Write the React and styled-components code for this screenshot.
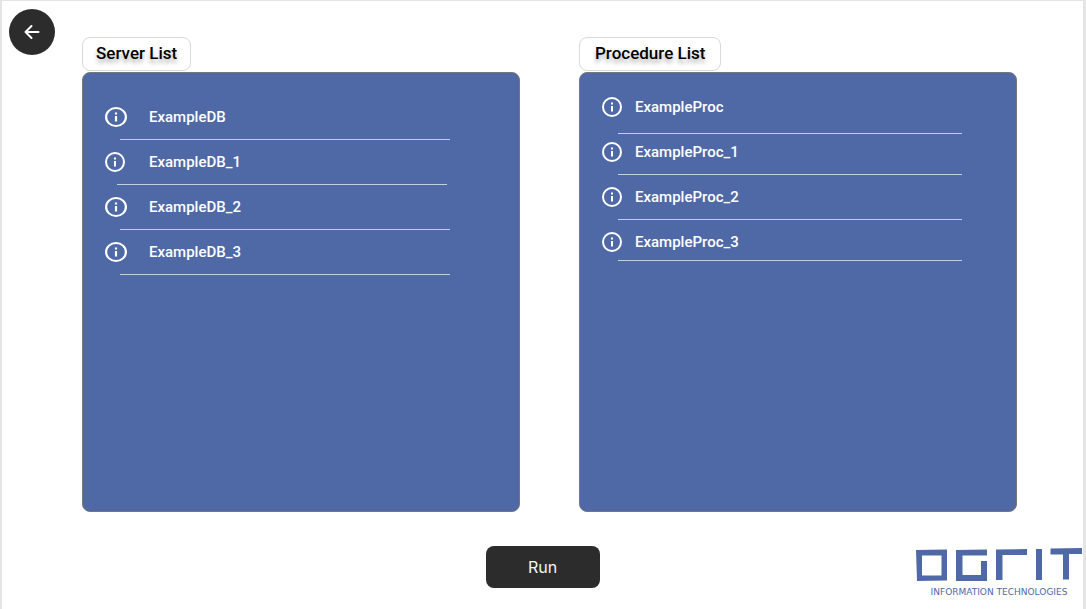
import React from "react";
import styled, { createGlobalStyle } from "styled-components";

const GlobalStyle = createGlobalStyle`
  * { box-sizing: border-box; }
  body {
    margin: 0;
    background: #ffffff;
    font-family: Roboto, "Liberation Sans", sans-serif;
  }
`;

const Page = styled.div`
  min-height: 100vh;
  display: flex;
  flex-direction: column;
  background: #ffffff;
  border: solid #e5e5e5;
  border-width: 1px 3px 0 2px;
`;

const Workspace = styled.main`
  flex: 1;
  display: flex;
  padding: 8px 66px 0 7px;
`;

const BackButton = styled.button`
  flex: none;
  width: 46px;
  height: 46px;
  margin-right: 27px;
  padding: 0;
  display: grid;
  place-items: center;
  border: 0;
  border-radius: 50%;
  background: #2c2c2c;
  color: #ffffff;
  cursor: pointer;
`;

const Columns = styled.div`
  flex: 1;
  display: grid;
  grid-template-columns: 1fr 1fr;
  gap: 59px;
  padding-top: 28px;
`;

const Column = styled.section`
  display: flex;
  flex-direction: column;
  align-items: flex-start;
`;

const Title = styled.h2`
  margin: 0 0 1px;
  height: 34px;
  padding: 0 ${(p) => p.$pad}px;
  border: 1px solid #d9d9d9;
  border-radius: 8px;
  font-size: 17px;
  font-weight: 500;
  line-height: 30px;
  color: #000000;
  text-shadow: 0 4px 4px rgba(0, 0, 0, 0.3);
`;

const Panel = styled.ul`
  flex: 1;
  align-self: stretch;
  margin: 0;
  padding: ${(p) => p.$top}px 0 24px 22px;
  list-style: none;
  border: 1px solid #75777c;
  border-radius: 8px;
  background: #4e69a6;
`;

const Item = styled.li`
  height: 45px;
`;

const ItemLabel = styled.div`
  height: 24px;
  display: grid;
  grid-template-columns: ${(p) => p.$iconColumn}px 1fr;
  align-items: center;
  font-size: 15px;
  font-weight: 500;
  line-height: 24px;
  color: #ffffff;
`;

const Divider = styled.hr`
  height: 1px;
  margin: ${(p) => p.$space}px ${(p) => p.$right}px 0 ${(p) => p.$left}px;
  border: 0;
  background: #c5cde2;
`;

const Footer = styled.footer`
  display: grid;
  grid-template-columns: 1fr auto 1fr;
  align-items: start;
  padding: 34px 0 11px;
`;

const RunButton = styled.button`
  grid-column: 2;
  width: 114px;
  height: 42px;
  padding: 0;
  border: 0;
  border-radius: 8px;
  background: #2c2c2c;
  color: #f5f5f5;
  font-family: Inter, Roboto, sans-serif;
  font-size: 16px;
  cursor: pointer;
`;

const Brand = styled.div`
  justify-self: end;
  display: flex;
  flex-direction: column;
  align-items: center;
  gap: 4px;
  padding: 2px 1px 0 0;
`;

const BrandTagline = styled.span`
  font-family: "DejaVu Sans", sans-serif;
  font-size: 9px;
  line-height: 12px;
  color: #4e69a6;
  white-space: nowrap;
`;

function InfoIcon({ width }) {
  return (
    <svg width={width} height="20" viewBox="0 0 20 20" preserveAspectRatio="none" aria-hidden="true">
      <circle cx="10" cy="10" r="9" fill="none" stroke="#ffffff" strokeWidth="2" />
      <path d="M9 5.5h2v2H9zM9 9h2v5.5H9z" fill="#ffffff" />
    </svg>
  );
}

function ArrowLeft() {
  return (
    <svg width="16" height="16" viewBox="0 0 16 16" fill="none" stroke="currentColor" strokeWidth="2" strokeLinecap="round" strokeLinejoin="round" aria-hidden="true">
      <path d="M14.5 8H1.5M7.5 2L1.5 8l6 6" />
    </svg>
  );
}

function BrandMark() {
  return (
    <svg width="166" height="34" viewBox="0 0 166 34" fill="#4e69a6" role="img" aria-label="OGRIT">
      <path fillRule="evenodd" d="M0 2L31 1.500V32.500L1 33zM6 7.500V27.500H25.500V7.500z" />
      <path d="M40 2L71 1.500V7.500H46.500V27H65V13H71V33H40z" />
      <path d="M80 1.500L111 1V7H86.500V32H80z" />
      <path d="M120 1h6V32h-6z" />
      <path d="M134.500 .5L166 0V6H153V31.500H147V6.500H134.500z" />
    </svg>
  );
}

const servers = [
  { name: "ExampleDB" },
  { name: "ExampleDB_1", compact: true },
  { name: "ExampleDB_2" },
  { name: "ExampleDB_3" },
];

const procedures = [
  { name: "ExampleProc", space: 14 },
  { name: "ExampleProc_1" },
  { name: "ExampleProc_2" },
  { name: "ExampleProc_3", space: 6 },
];

function ListColumn({ title, titlePad, items, top, iconColumn, iconWidth, left, right }) {
  return (
    <Column>
      <Title $pad={titlePad}>{title}</Title>
      <Panel $top={top}>
        {items.map((item) => (
          <Item key={item.name}>
            <ItemLabel $iconColumn={iconColumn}>
              <InfoIcon width={item.compact ? 20 : iconWidth} />
              <span>{item.name}</span>
            </ItemLabel>
            <Divider
              $space={item.space ?? 10}
              $left={item.compact ? left - 3 : left}
              $right={item.compact ? right + 3 : right}
            />
          </Item>
        ))}
      </Panel>
    </Column>
  );
}

export default function App() {
  return (
    <Page>
      <GlobalStyle />
      <Workspace>
        <BackButton type="button" aria-label="Back">
          <ArrowLeft />
        </BackButton>
        <Columns>
          <ListColumn title="Server List" titlePad={13} items={servers} top={32} iconColumn={44} iconWidth={22} left={15} right={69} />
          <ListColumn title="Procedure List" titlePad={15} items={procedures} top={22} iconColumn={33} iconWidth={20} left={16} right={54} />
        </Columns>
      </Workspace>
      <Footer>
        <RunButton type="button">Run</RunButton>
        <Brand>
          <BrandMark />
          <BrandTagline>INFORMATION TECHNOLOGIES</BrandTagline>
        </Brand>
      </Footer>
    </Page>
  );
}
